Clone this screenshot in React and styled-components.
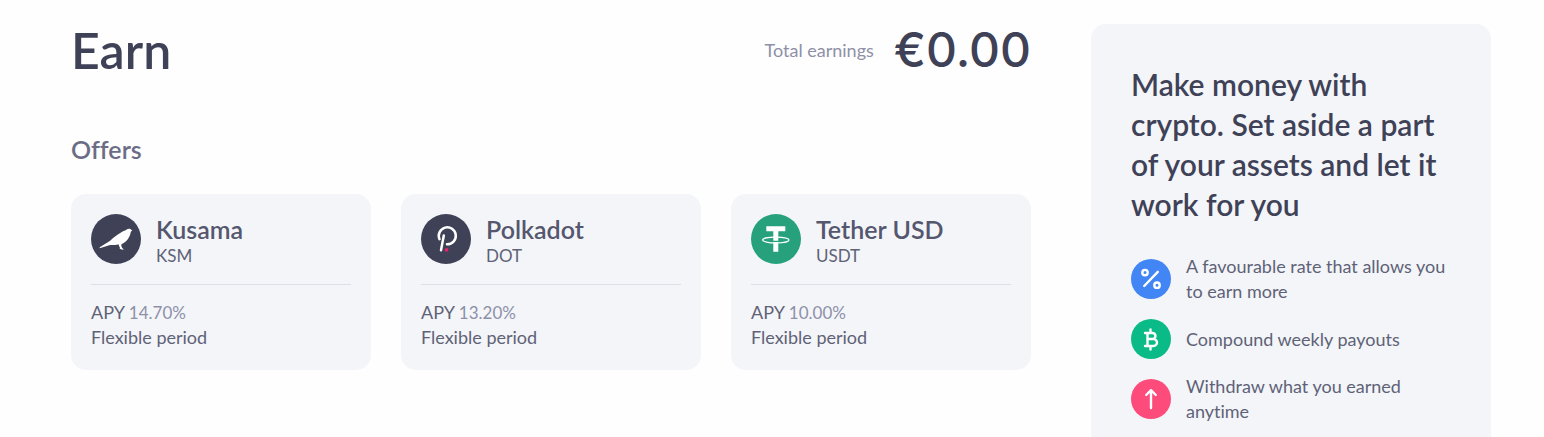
import React from 'react';
import styled, { createGlobalStyle } from 'styled-components';

const offers = [
  { name: 'Kusama', symbol: 'KSM', apy: '14.70%' },
  { name: 'Polkadot', symbol: 'DOT', apy: '13.20%' },
  { name: 'Tether USD', symbol: 'USDT', apy: '10.00%' },
];

const coinColors = {
  KSM: '#3f4257',
  DOT: '#3f4257',
  USDT: '#26a17b',
};

const benefits = [
  { icon: 'percent', color: '#4285f4', text: 'A favourable rate that allows you to earn more' },
  { icon: 'bitcoin', color: '#0abb87', text: 'Compound weekly payouts' },
  { icon: 'arrow', color: '#fd4b7b', text: 'Withdraw what you earned anytime' },
];

function CoinIcon({ symbol }) {
  return (
    <CoinSvg viewBox='0 0 50 50' aria-hidden='true'>
      <circle cx='25' cy='25' r='25' fill={coinColors[symbol]} />
      {symbol === 'KSM' && (
        <path
          fill='#fff'
          d='M41.500 16.600c-.7-.2-1-.9-1.800-1.400-1.300-.8-2.900-.6-4 .4-1.300 1.100-3.200 1.300-4.900 2.300-3.300 2-6.300 4.200-9 6.300-1.500 1.200-2.200 2.300-4.200 3.600L8.700 33.200v1l8.800-2.800c2-.6 4.200-.2 6.500-.4 1.400-.1 2.400-.3 3.500-.7.300 1.200.9 2.700 1.700 3.900l-.9.900c1.100-.2 2.200 0 3.100.7l1.500-.6c-1.900-.8-2.800-2.400-2.500-4.900 3.300-1.700 5.800-4 7.300-6.600 1-1.700 1.700-3.100 1.900-4.900.1-1 .5-1.500 1.900-2.200z'
        />
      )}
      {symbol === 'DOT' && (
        <>
          <path
            fill='none'
            stroke='#fff'
            strokeWidth='2.500'
            strokeLinecap='round'
            d='M18.500 25.200A8.500 8.500 0 1 1 26 30.300M22.800 21.500 20 36.200'
          />
          <circle cx='25.500' cy='35.800' r='1.900' fill='#e6236f' />
        </>
      )}
      {symbol === 'USDT' && (
        <>
          <path fill='#fff' d='M15.300 12.300h19v5h-7v9.500h-5v-9.500h-7zM22.300 28h5v9.700h-5z' />
          <ellipse cx='24.800' cy='26' rx='13.200' ry='2.900' fill='none' stroke='#fff' strokeWidth='1.200' />
        </>
      )}
    </CoinSvg>
  );
}

function BenefitIcon({ icon, color }) {
  return (
    <BenefitSvg
      viewBox='0 0 40 40'
      fill='none'
      stroke='#fff'
      strokeWidth='2.400'
      strokeLinecap='round'
      strokeLinejoin='round'
      aria-hidden='true'
    >
      <circle cx='20' cy='20' r='20' fill={color} stroke='none' />
      {icon === 'percent' && (
        <>
          <circle cx='14' cy='13.600' r='2.700' />
          <circle cx='26' cy='26.200' r='2.700' />
          <path d='M26.800 12.800 13.200 27' />
        </>
      )}
      {icon === 'bitcoin' && (
        <path d='M14 14h7.500a3 3 0 0 1 0 6h-5 6a3.500 3.500 0 0 1 0 7H14M16.500 14v13M19.500 10.500V14M19.500 27v3.500' />
      )}
      {icon === 'arrow' && <path d='M20 29V11.500M15.200 16 20 11.200 24.800 16' />}
    </BenefitSvg>
  );
}

function App() {
  return (
    <>
      <GlobalStyle />
      <Page>
        <Main>
          <Header>
            <h1>Earn</h1>
            <Total>
              <span>Total earnings</span>
              <strong>€0.00</strong>
            </Total>
          </Header>
          <SectionTitle>Offers</SectionTitle>
          <Offers>
            {offers.map(({ name, symbol, apy }) => (
              <Card key={symbol}>
                <CardHeader>
                  <CoinIcon symbol={symbol} />
                  <div>
                    <CoinName>{name}</CoinName>
                    <CoinSymbol>{symbol}</CoinSymbol>
                  </div>
                </CardHeader>
                <Terms>
                  <p>
                    APY <span>{apy}</span>
                  </p>
                  <p>Flexible period</p>
                </Terms>
              </Card>
            ))}
          </Offers>
        </Main>
        <Aside>
          <h2>Make money with crypto. Set aside a part of your assets and let it work for you</h2>
          <Benefits>
            {benefits.map(({ icon, color, text }) => (
              <Benefit key={icon}>
                <BenefitIcon icon={icon} color={color} />
                <p>{text}</p>
              </Benefit>
            ))}
          </Benefits>
        </Aside>
      </Page>
    </>
  );
}

const GlobalStyle = createGlobalStyle`
  * {
    box-sizing: border-box;
    margin: 0;
    padding: 0;
  }
  body {
    background: #fefefe;
    color: #5f6277;
    font-family: Lato, 'Liberation Sans', sans-serif;
    font-size: 18px;
    font-variant-ligatures: none;
    line-height: 25px;
  }
`;

const Page = styled.div`
  display: flex;
  align-items: flex-start;
  gap: 60px;
  padding: 24px 53px 0 71px;
`;

const Main = styled.main`
  flex: 1;
  min-width: 0;
`;

const Header = styled.header`
  display: flex;
  align-items: center;
  justify-content: space-between;
  color: #3f4257;
  h1 {
    font-size: 50px;
    font-weight: 600;
    line-height: 52px;
  }
`;

const Total = styled.div`
  display: flex;
  align-items: center;
  gap: 20px;
  span {
    color: #8e90a8;
  }
  strong {
    font-family: Inter, Lato, sans-serif;
    font-size: 48px;
    font-weight: 500;
    line-height: 52px;
  }
`;

const SectionTitle = styled.h2`
  margin: 56px 0 28px;
  color: #6b6d86;
  font-size: 25px;
  font-weight: 600;
  line-height: 34px;
`;

const Offers = styled.div`
  display: grid;
  grid-template-columns: repeat(3, 1fr);
  gap: 30px;
`;

const Card = styled.article`
  padding: 20px;
  border-radius: 15px;
  background: #f3f5f9;
`;

const CardHeader = styled.div`
  display: flex;
  gap: 15px;
  padding-bottom: 16px;
  border-bottom: 1px solid #dcdfe6;
`;

const CoinSvg = styled.svg`
  flex: none;
  width: 50px;
  height: 50px;
`;

const CoinName = styled.h3`
  color: #54576d;
  font-size: 25px;
  font-weight: 600;
  line-height: 30px;
`;

const CoinSymbol = styled.p`
  font-size: 17px;
  line-height: 24px;
`;

const Terms = styled.div`
  padding-top: 15px;
  span {
    color: #8e90a8;
    font-size: 17px;
  }
`;

const Aside = styled.aside`
  flex: 0 0 400px;
  padding: 40px;
  border-radius: 15px;
  background: #f3f5f9;
  h2 {
    color: #3f4257;
    font-size: 30px;
    font-weight: 600;
    line-height: 40px;
  }
`;

const Benefits = styled.ul`
  display: grid;
  gap: 15px;
  margin-top: 30px;
  list-style: none;
`;

const Benefit = styled.li`
  display: flex;
  align-items: center;
  gap: 15px;
`;

const BenefitSvg = styled.svg`
  flex: none;
  width: 40px;
  height: 40px;
`;

export default App;
